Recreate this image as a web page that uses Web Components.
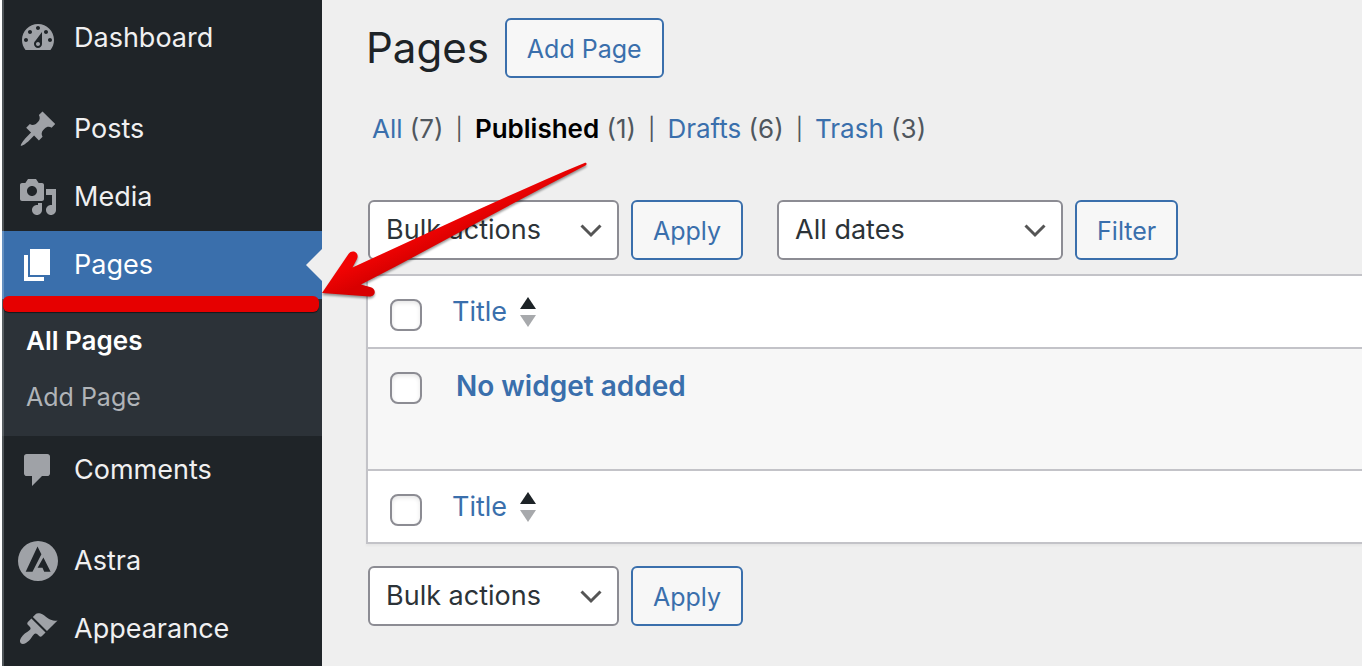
<!DOCTYPE html>
<html lang="en">
<head>
<meta charset="utf-8">
<meta name="viewport" content="width=device-width, initial-scale=1">
<title>Pages</title>
<style>
  html { background: #efefef; }
  body {
    margin: 0;
    font-family: Inter, "Liberation Sans", sans-serif;
    font-size: 26px;
    line-height: 32px;
    color: #2c3338;
    --blue: #3a6fac;
    --dark: #1f2428;
    --line: #c3c3c8;
    --field: #8c8c93;
    --soft: #f7f7f7;
  }
</style>
</head>
<body>
<admin-app>
  <admin-menu slot="menu">
    <menu-item icon="dashboard">Dashboard</menu-item>
    <menu-separator></menu-separator>
    <menu-item icon="post">Posts</menu-item>
    <menu-item icon="media">Media</menu-item>
    <menu-item icon="page" current>Pages</menu-item>
    <sub-menu>
      <sub-item current>All Pages</sub-item>
      <sub-item>Add Page</sub-item>
    </sub-menu>
    <menu-item icon="comments">Comments</menu-item>
    <menu-separator></menu-separator>
    <menu-item icon="astra">Astra</menu-item>
    <menu-item icon="appearance">Appearance</menu-item>
  </admin-menu>
  <page-heading action="Add Page">Pages</page-heading>
  <status-filter></status-filter>
  <table-nav>
    <drop-down label="Select bulk action" options="Bulk actions,Edit,Move to Trash"></drop-down>
    <action-button>Apply</action-button>
    <drop-down wide label="Filter by date" options="All dates"></drop-down>
    <action-button>Filter</action-button>
  </table-nav>
  <pages-table></pages-table>
  <table-nav>
    <drop-down label="Select bulk action" options="Bulk actions,Edit,Move to Trash"></drop-down>
    <action-button>Apply</action-button>
  </table-nav>
  <arrow-mark slot="overlay"></arrow-mark>
</admin-app>

<script>
const ICONS = {
  dashboard: '<path d="M3.76 16h12.48c1.1-1.37 1.76-3.11 1.76-5 0-4.42-3.58-8-8-8s-8 3.58-8 8c0 1.89.66 3.63 1.76 5zM10 4c.55 0 1 .45 1 1s-.45 1-1 1-1-.45-1-1 .45-1 1-1zM6 6c.55 0 1 .45 1 1s-.45 1-1 1-1-.45-1-1 .45-1 1-1zm8 0c.55 0 1 .45 1 1s-.45 1-1 1-1-.45-1-1 .45-1 1-1zm-5.37 5.55L12 7v6c0 1.1-.9 2-2 2s-2-.9-2-2c0-.57.24-1.08.63-1.45zM4 10c.55 0 1 .45 1 1s-.45 1-1 1-1-.45-1-1 .45-1 1-1zm12 0c.55 0 1 .45 1 1s-.45 1-1 1-1-.45-1-1 .45-1 1-1zm-5 3c0-.55-.45-1-1-1s-1 .45-1 1 .45 1 1 1 1-.45 1-1z"/>',
  post: '<path d="M10.44 3.02l1.82-1.82 6.36 6.35-1.83 1.82c-1.05-.68-2.48-.57-3.41.36l-.75.75c-.92.93-1.04 2.35-.35 3.41l-1.83 1.82-2.41-2.41-2.8 2.79c-.42.42-3.38 2.71-3.8 2.29s1.86-3.39 2.28-3.81l2.79-2.79L4.1 9.36l1.83-1.82c1.05.69 2.48.57 3.4-.36l.75-.75c.93-.92 1.05-2.35.36-3.41z"/>',
  media: '<path d="M13 11V4c0-.55-.45-1-1-1h-1.67L9 1H5L3.67 3H2c-.55 0-1 .45-1 1v7c0 .55.45 1 1 1h10c.55 0 1-.45 1-1zM7 4.5c1.38 0 2.5 1.12 2.5 2.5S8.38 9.5 7 9.5 4.5 8.38 4.5 7 5.62 4.5 7 4.5zM14 6h5v10.500c0 1.38-1.12 2.500-2.500 2.500S14 17.880 14 16.500s1.120-2.500 2.500-2.500c.17 0 .34.02.5.05V9h-3V6zm-4 8.050V13h2v3.500c0 1.380-1.120 2.500-2.500 2.500S7 17.880 7 16.500 8.120 14 9.500 14c.17 0 .34.02.5.05z"/>',
  page: '<path d="M6 15V2h10v13H6zm-1 1h8v2H3V5h2v11z"/>',
  comments: '<path d="M4.300 2h10.400c.7 0 1.300.6 1.300 1.300v8.400c0 .7-.6 1.300-1.300 1.300H12l-5 5v-5H4.300C3.600 13 3 12.400 3 11.700V3.300C3 2.600 3.600 2 4.300 2z"/>',
  astra: '<path fill-rule="evenodd" d="M10 0a10 10 0 1 0 0 20 10 10 0 0 0 0-20zM9.750 2.700l1.950 3.900-4.450 8.800h-3.400zM12.700 8.200l3.600 7.200h-3.200l-.85-2H9.800z"/>',
  appearance: '<path d="M14.48 11.06L7.41 3.99l1.5-1.5c.5-.56 2.3-.47 3.51.32 1.21.8 1.43 1.28 2.91 2.1 1.18.64 2.45 1.26 4.45.85zm-.71.71L6.7 4.700 4.930 6.470c-.39.39-.39 1.020 0 1.410l1.060 1.060c.39.39.39 1.030 0 1.420-.6.6-1.430 1.110-2.210 1.690-.35.26-.7.53-1.010.84C1.430 14.230.4 16.080 1.400 17.070c.99 1 2.840-.03 4.180-1.360.31-.31.58-.66.85-1.020.57-.78 1.080-1.610 1.690-2.210.39-.39 1.020-.39 1.410 0l1.060 1.060c.39.39 1.020.39 1.410 0z"/>'
};

const define = (name, render) => customElements.define(name, class extends HTMLElement {
  constructor() { super(); this.attachShadow({ mode: 'open' }); }
  connectedCallback() {
    this.shadowRoot.innerHTML = '<style>*{box-sizing:border-box}</style>' + render(this);
  }
});

define('admin-app', () => `
  <style>
    :host { display: flex; position: relative; min-height: 100vh; overflow: hidden; padding-left: 2px; background: linear-gradient(to right, #fff 2px, #efefef 2px); box-sizing: border-box; }
    main { flex: 1; min-width: 0; padding: 18px 0 40px 44px; }
  </style>
  <slot name="menu"></slot>
  <main><slot></slot></main>
  <slot name="overlay"></slot>`);

define('admin-menu', () => `
  <style>
    :host { display: block; flex: none; width: 320px; box-sizing: border-box; padding-top: 4px; background: var(--dark); box-shadow: inset 2px 0 #50565a; }
  </style>
  <nav aria-label="Main menu"><slot></slot></nav>`);

define('menu-separator', () => `<style>:host { display: block; height: 23px; }</style>`);

define('menu-item', el => `
  <style>
    :host { display: block; position: relative; }
    a { display: flex; align-items: center; gap: 16px; height: 68px; padding: 0 16px; color: #f0f0f1; font-size: 27px; text-decoration: none; }
    svg { width: 40px; height: 40px; flex: none; fill: #9fa2a7; }
    :host([current]) a { background: var(--blue); box-shadow: inset 2px 0 #6590c0; color: #fff; }
    :host([current]) svg { fill: #fff; }
    .notch { position: absolute; right: 0; top: 18px; border: 16px solid transparent; border-left-width: 0; border-right-color: #efefef; }
    .mark { position: absolute; left: 1px; right: 3px; top: 65px; height: 16px; border-radius: 6px; background: #e60000; box-shadow: 0 1px 1px #0008; z-index: 1; }
  </style>
  <a href="#"><svg viewBox="0 0 20 20" aria-hidden="true">${ICONS[el.getAttribute('icon')]}</svg><span><slot></slot></span></a>
  ${el.hasAttribute('current') ? '<div class="notch"></div><div class="mark"></div>' : ''}`);

define('sub-menu', () => `
  <style>:host { display: block; padding: 14px 0 11px; background: #2c3238; box-shadow: inset 2px 0 #5a6064; }</style>
  <slot></slot>`);

define('sub-item', () => `
  <style>
    :host { display: block; font-size: 25px; }
    a { display: block; padding: 12px 24px; color: #b0b4b8; text-decoration: none; }
    :host([current]) { font-size: 26px; }
    :host([current]) a { color: #fff; font-weight: 600; }
  </style>
  <a href="#"><slot></slot></a>`);

define('page-heading', el => `
  <style>
    :host { display: flex; align-items: center; gap: 16px; }
    h1 { margin: 0; font-size: 42px; line-height: 60px; font-weight: 400; color: #1d2327; }
  </style>
  <h1><slot></slot></h1><action-button>${el.getAttribute('action')}</action-button>`);

define('action-button', () => `
  <style>
    :host { display: block; }
    button { height: 60px; padding: 2px 20px 0; border: 2px solid var(--blue); border-radius: 6px; background: var(--soft); color: var(--blue); font: inherit; font-size: 25px; white-space: nowrap; }
  </style>
  <button type="button"><slot></slot></button>`);

define('status-filter', () => `
  <style>
    :host { display: block; margin: 35px 0 0 6px; color: #50575e; }
    ul { display: flex; gap: 12px; margin: 0; padding: 0; list-style: none; white-space: nowrap; }
    li { display: flex; gap: 12px; }
    li:not(:last-child)::after { content: "|"; font-size: 22px; }
    a { color: var(--blue); text-decoration: none; }
    a[aria-current] { color: #000; font-weight: 600; }
  </style>
  <ul>
    <li><span><a href="#">All</a> (7)</span></li>
    <li><span><a href="#" aria-current="page">Published</a> (1)</span></li>
    <li><span><a href="#">Drafts</a> (6)</span></li>
    <li><span><a href="#">Trash</a> (3)</span></li>
  </ul>`);

define('table-nav', () => `
  <style>
    :host { display: flex; gap: 12px; margin: 55px 0 14px 2px; }
    :host(:last-of-type) { margin: 22px 0 0 2px; }
    ::slotted([wide]) { margin-left: 22px; }
  </style>
  <slot></slot>`);

define('drop-down', el => `
  <style>
    :host { display: grid; width: 251px; }
    :host([wide]) { width: 286px; }
    select, svg { grid-area: 1 / 1; }
    select { appearance: none; width: 100%; height: 60px; margin: 0; padding: 0 48px 0 16px; border: 2px solid var(--field); border-radius: 6px; background: #fff; color: #2c3338; font: inherit; font-size: 27px; }
    svg { justify-self: end; align-self: center; width: 24px; height: 24px; margin-right: 16px; pointer-events: none; fill: none; stroke: #555; stroke-width: 3; }
  </style>
  <select aria-label="${el.getAttribute('label')}">${el.getAttribute('options').split(',').map(o => `<option>${o}</option>`).join('')}</select>
  <svg viewBox="0 0 24 24" aria-hidden="true"><path d="M2.500 7.500 12 17l9.500-9.500"/></svg>`);

define('pages-table', () => {
  const heading = `
    <th scope="col" class="check"><input type="checkbox" aria-label="Select all"></th>
    <th scope="col"><a href="#">Title
      <svg viewBox="0 0 16 30" aria-hidden="true"><path fill="#1d2327" d="M8 0l8 12H0z"/><path fill="#a7a9ac" d="M8 30l8-12H0z"/></svg></a></th>`;
  return `
  <style>
    :host { display: block; border: 2px solid var(--line); border-right: 0; box-shadow: 0 2px 2px #0000000a; background: #fff; }
    table { width: 100%; border-collapse: collapse; }
    th, td { padding: 0; text-align: left; vertical-align: top; font-weight: 400; }
    thead tr { border-bottom: 2px solid var(--line); }
    tfoot tr { border-top: 2px solid var(--line); }
    thead th, tfoot th { height: 72px; padding-top: 20px; }
    tbody td { height: 122px; padding: 21px 0 0 4px; background: var(--soft); }
    .check { width: 84px; }
    th.check, td.check { padding: 23px 0 0 22px; }
    a { display: inline-flex; align-items: center; gap: 13px; color: var(--blue); text-decoration: none; font-size: 27px; }
    .title { font-size: 28px; font-weight: 600; }
    a svg { width: 16px; height: 30px; }
    input { appearance: none; display: block; width: 32px; height: 32px; margin: 0; border: 2px solid var(--field); border-radius: 8px; background: #fff; box-shadow: inset 0 2px 4px #0000001a; }
  </style>
  <table>
    <thead><tr>${heading}</tr></thead>
    <tbody><tr>
      <td class="check"><input type="checkbox" aria-label="Select No widget added"></td>
      <td><a class="title" href="#">No widget added</a></td>
    </tr></tbody>
    <tfoot><tr>${heading}</tr></tfoot>
  </table>`;
});

define('arrow-mark', () => `
  <style>
    :host { position: absolute; left: 318px; top: 158px; pointer-events: none; }
    svg { display: block; width: 276px; height: 146px; filter: drop-shadow(0 2px 1px #0006); }
  </style>
  <svg viewBox="318 158 276 146" aria-hidden="true">
    <defs><linearGradient id="red" gradientUnits="userSpaceOnUse" x1="395" y1="243" x2="405" y2="264"><stop offset="0" stop-color="#f20303"/><stop offset="1" stop-color="#d80000"/></linearGradient></defs>
    <path fill="url(#red)" d="M322 293 348.500 254C352 248.500 360 252.500 357 259L352.500 267.500C430 232 510 194 584.500 163 586.500 162.300 587.500 164.500 585.500 165.500 510 204 436 246 361 284.500L370 287C377 288.500 376 297 369 296.500z"/>
  </svg>`);
</script>
</body>
</html>
